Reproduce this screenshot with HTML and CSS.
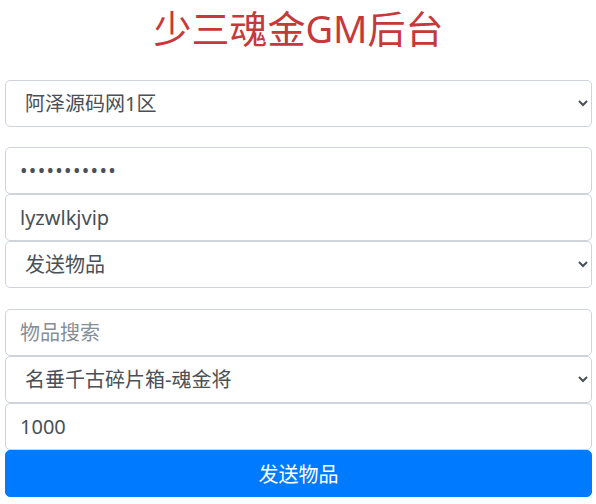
FILE: index.html
```html
<!DOCTYPE html>
<html lang="zh-CN">
<head>
<meta charset="utf-8">
<title>少三魂金GM后台</title>
<link rel="stylesheet" href="styles.css">
</head>
<body>
<div class="page">
  <h1 class="title">少三魂金GM后台</h1>
  <form class="form">
    <div class="group">
      <select class="control select">
        <option>阿泽源码网1区</option>
      </select>
    </div>
    <div class="group">
      <input class="control password" type="password" value="12345678901">
      <input class="control" type="text" value="lyzwlkjvip">
      <select class="control select">
        <option>发送物品</option>
      </select>
    </div>
    <div class="group group-last">
      <input class="control" type="text" placeholder="物品搜索">
      <select class="control select">
        <option>名垂千古碎片箱-魂金将</option>
      </select>
      <input class="control" type="text" value="1000">
      <button class="btn" type="button">发送物品</button>
    </div>
  </form>
</div>
</body>
</html>
```
FILE: styles.css
```css
* { box-sizing: border-box; }
html, body { margin: 0; padding: 0; background: #fff; }
body {
  font-family: "Noto Sans", "Noto Sans CJK SC", sans-serif;
  color: #495057;
}
.page {
  padding: 0 4px 0 5px;
}
.title {
  margin: 4px 0 0;
  height: 48px;
  font-size: 38px;
  line-height: 48px;
  font-weight: 400;
  text-align: center;
  color: #c7383a;
  font-family: "Noto Sans", "Noto Sans CJK SC", sans-serif;
}
.form {
  margin-top: 28px;
  display: flex;
  flex-direction: column;
  gap: 20px;
}
.group {
  display: flex;
  flex-direction: column;
}
.group-last {
  margin-top: 1px;
}
.control {
  display: block;
  width: 100%;
  height: 47px;
  margin: 0;
  padding: 0 14px;
  font-family: "Noto Sans", "Noto Sans CJK SC", sans-serif;
  font-size: 20px;
  color: #495057;
  background: #fff;
  border: 1px solid #ced4da;
  border-radius: 5px;
  outline: none;
}
.password {
  letter-spacing: 1.3px;
}
.control::placeholder { color: #868e96; }
.select {
  padding-left: 15px;
  padding-right: 6px;
}
.btn {
  display: block;
  width: 100%;
  height: 47px;
  margin: 0;
  padding: 0;
  border: 1px solid #007bff;
  border-radius: 5px;
  background: #007bff;
  color: #fff;
  font-family: "Noto Sans", "Noto Sans CJK SC", sans-serif;
  font-size: 20px;
}
```
